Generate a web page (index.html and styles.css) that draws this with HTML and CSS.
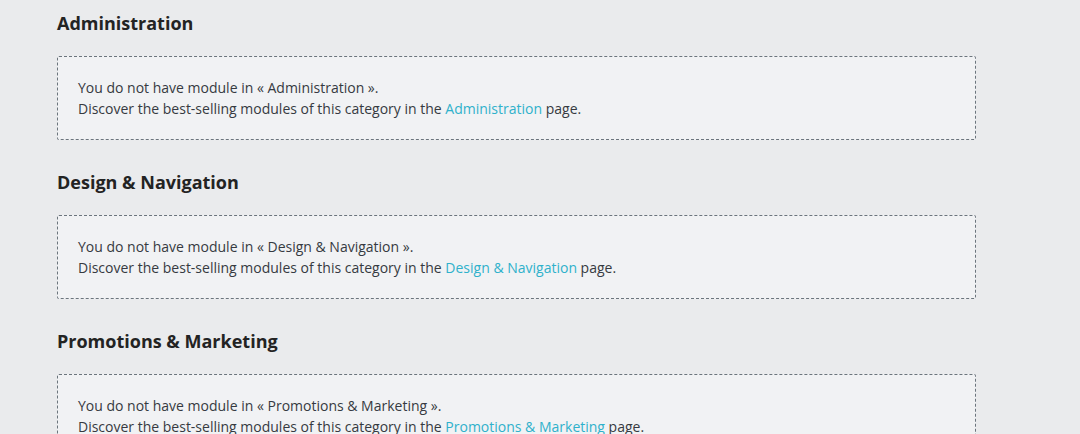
FILE: index.html
```html
<!DOCTYPE html>
<html>
<head>
<meta charset="utf-8">
<link rel="stylesheet" href="styles.css">
</head>
<body>
<div class="page">
  <section class="category">
    <h2 class="category-title">Administration</h2>
    <div class="empty-box">
      <p>You do not have module in « Administration ».</p>
      <p>Discover the best-selling modules of this category in the <a href="#">Administration</a> page.</p>
    </div>
  </section>
  <section class="category">
    <h2 class="category-title">Design &amp; Navigation</h2>
    <div class="empty-box">
      <p>You do not have module in « Design &amp; Navigation ».</p>
      <p>Discover the best-selling modules of this category in the <a href="#">Design &amp; Navigation</a> page.</p>
    </div>
  </section>
  <section class="category">
    <h2 class="category-title">Promotions &amp; Marketing</h2>
    <div class="empty-box">
      <p>You do not have module in « Promotions &amp; Marketing ».</p>
      <p>Discover the best-selling modules of this category in the <a href="#">Promotions &amp; Marketing</a> page.</p>
    </div>
  </section>
</div>
</body>
</html>
```
FILE: styles.css
```css
html, body {
  margin: 0;
  padding: 0;
  background: #eaebed;
}
body {
  font-family: "Open Sans", "Noto Sans", sans-serif;
  color: #363a41;
  overflow: hidden;
}
.page {
  padding: 11px 0 0 57px;
  width: 919px;
  display: flex;
  flex-direction: column;
  gap: 30px;
}
.category-title {
  margin: 0 0 21px;
  font-size: 18px;
  line-height: 24px;
  font-weight: 700;
  color: #232323;
}
.empty-box {
  border: 1px dashed #6c757d;
  border-radius: 2px;
  background: #f1f2f4;
  padding: 20px;
  font-size: 14px;
  line-height: 21px;
}
.empty-box p {
  margin: 0;
}
.empty-box a {
  color: #2fb1cb;
  text-decoration: none;
}
```
